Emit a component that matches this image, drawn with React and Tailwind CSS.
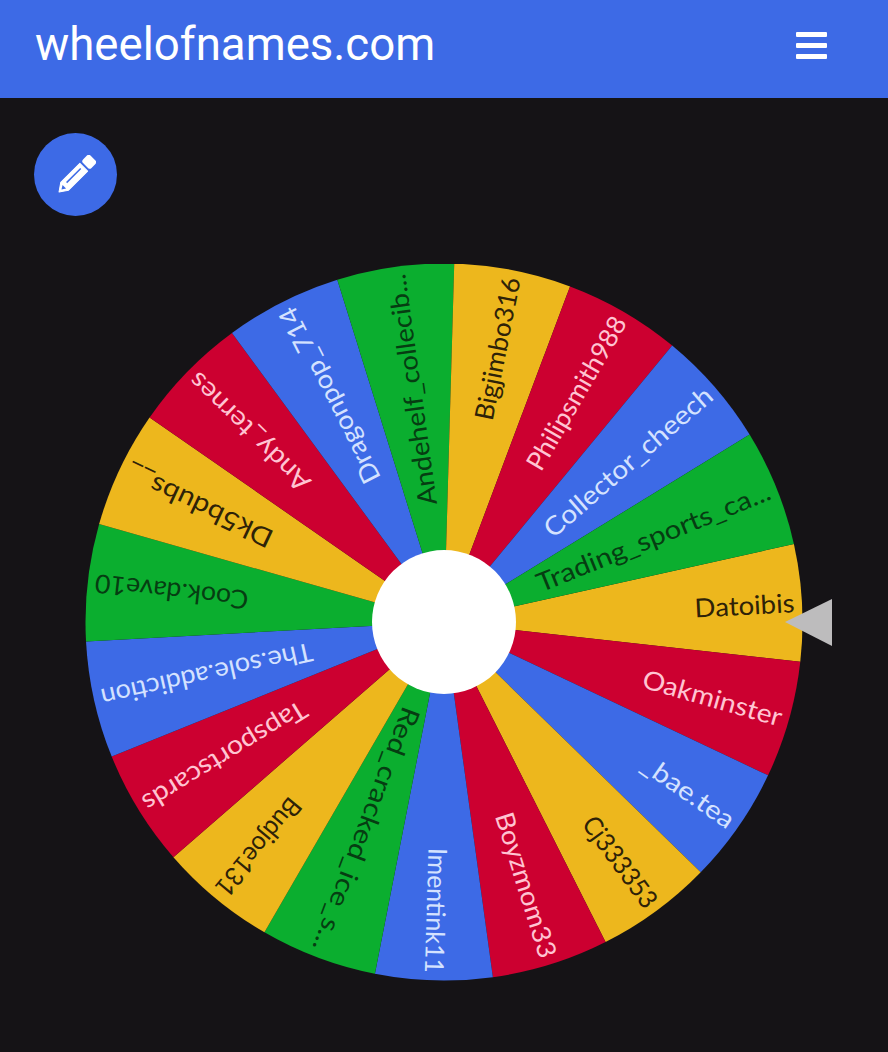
const colors = {
  yellow: { fill: "#edb71d", text: "#2e2208" },
  green: { fill: "#0bae2f", text: "#063d12" },
  blue: { fill: "#3d6ae6", text: "#d4e2ff" },
  red: { fill: "#cc0030", text: "#ffc4d2" },
};

// clockwise from the slice under the pointer; from = where the label starts along the radius
const slices = [
  { name: "Datoibis", color: "yellow", from: 251 },
  { name: "Oakminster", color: "red", from: 207 },
  { name: "_bae.tea", color: "blue", from: 244 },
  { name: "Cj333353", color: "yellow", from: 244 },
  { name: "Boyzmom33", color: "red", from: 200 },
  { name: "Imentink11", color: "blue", from: 226 },
  { name: "Red_cracked_ice_s...", color: "green", from: 92 },
  { name: "Budjoe131", color: "yellow", from: 232 },
  { name: "Tapsportscards", color: "red", from: 163 },
  { name: "The.sole.addiction", color: "blue", from: 135 },
  { name: "Cook.dave10", color: "green", from: 197 },
  { name: "Dk5bdubs__", color: "yellow", from: 191 },
  { name: "Andy_ternes", color: "red", from: 193 },
  { name: "Dragonpop_714", color: "blue", from: 157 },
  { name: "Andehelf_collecib...", color: "green", from: 118 },
  { name: "Bigjimbo316", color: "yellow", from: 206 },
  { name: "Philipsmith988", color: "red", from: 178 },
  { name: "Collector_cheech", color: "blue", from: 137 },
  { name: "Trading_sports_ca...", color: "green", from: 101 },
];

const cx = 359;
const cy = 358;
const radius = 358.5;
const labelEnd = 351;
const step = 360 / slices.length;
const startAngle = -3.1;

const polar = (deg, r) => {
  const rad = (deg * Math.PI) / 180;
  return [cx + r * Math.cos(rad), cy + r * Math.sin(rad)];
};

const slicePath = (mid) => {
  const [x1, y1] = polar(mid - step / 2, radius);
  const [x2, y2] = polar(mid + step / 2, radius);
  return `M${cx} ${cy}L${x1} ${y1}A${radius} ${radius} 0 0 1 ${x2} ${y2}Z`;
};

const Wheel = () => (
  <svg width="748" height="717" viewBox="0 0 748 717" className="block ml-[85px] mt-[48px]">
    {slices.map((s, i) => {
      const mid = startAngle + i * step;
      return (
        <g key={s.name}>
          <path d={slicePath(mid)} fill={colors[s.color].fill} />
          <text
            transform={`rotate(${mid} ${cx} ${cy})`}
            x={cx + s.from}
            y={cy}
            dy="0.35em"
            textLength={labelEnd - s.from}
            lengthAdjust="spacingAndGlyphs"
            fill={colors[s.color].text}
            fontSize="26"
            fontFamily="Lato, 'Open Sans', sans-serif"
          >
            {s.name}
          </text>
        </g>
      );
    })}
    <circle cx={cx} cy={cy} r="72" fill="#ffffff" />
    <polygon points="700,358 747,335 747,382" fill="#bdbcbd" />
  </svg>
);

// pencil lying along x with its tip at 0, turned 45deg to point bottom-left
const PencilIcon = () => (
  <svg width="40" height="40" viewBox="0 0 40 40">
    <g transform="translate(3 37) rotate(-45)">
      <path d="M0 0L8 -5.5H35V5.5H8Z" fill="#ffffff" strokeLinejoin="round" stroke="#ffffff" strokeWidth="1" />
      <rect x="37.5" y="-6" width="10.5" height="12" rx="2.5" fill="#ffffff" />
      <rect x="12" y="-2" width="20" height="1.5" fill="#3d6ae6" />
      <path d="M3.5 0L7.5 -2.5V2.5Z" fill="#3d6ae6" />
    </g>
  </svg>
);

export default function App() {
  return (
    <div className="min-h-[1052px] bg-[#151316] font-['Roboto',sans-serif]">
      <header className="h-[98px] bg-[#3d6ae6] flex items-center justify-between pl-[35px] pr-[61px] pb-[8px]">
        <h1 className="text-[45.6px] leading-none font-normal text-white">wheelofnames.com</h1>
        <button className="flex flex-col gap-[6px] w-[31px]">
          <span className="h-[5px] rounded-[1px] bg-white" />
          <span className="h-[5px] rounded-[1px] bg-white" />
          <span className="h-[5px] rounded-[1px] bg-white" />
        </button>
      </header>
      <main className="pt-[35px]">
        <button className="ml-[34px] w-[83px] h-[83px] rounded-full bg-[#3d6ae6] flex items-center justify-center">
          <PencilIcon />
        </button>
        <Wheel />
      </main>
    </div>
  );
}
